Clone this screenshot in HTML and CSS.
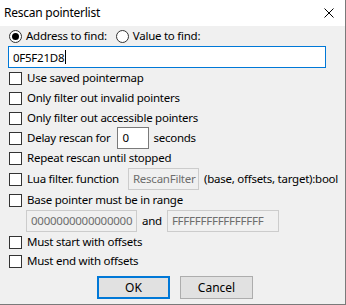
FILE: index.html
```html
<!DOCTYPE html>
<html lang="en">
<head>
  <meta charset="UTF-8" />
  <title>Rescan pointerlist</title>
  <link rel="stylesheet" href="styles.css">
</head>
<body>
  <div class="dialog">
    <div class="titlebar">
      <span class="title">Rescan pointerlist</span>
      <svg class="close" width="10" height="10" viewBox="0 0 10 10">
        <path d="M0.5 0.5 L9.5 9.5 M9.5 0.5 L0.5 9.5" stroke="#000" stroke-width="1" fill="none"/>
      </svg>
    </div>
    <div class="content">
      <div class="row radios">
        <span class="radio checked"></span><span class="label">Address to find:</span>
        <span class="radio second"></span><span class="label">Value to find:</span>
      </div>
      <div class="address">0F5F21D8<span class="caret"></span></div>

      <div class="row"><span class="check"></span><span class="label">Use saved pointermap</span></div>
      <div class="row"><span class="check"></span><span class="label">Only filter out invalid pointers</span></div>
      <div class="row"><span class="check"></span><span class="label">Only filter out accessible pointers</span></div>
      <div class="row">
        <span class="check"></span><span class="label">Delay rescan for</span>
        <span class="field delay">0</span>
        <span class="label">seconds</span>
      </div>
      <div class="row"><span class="check"></span><span class="label">Repeat rescan until stopped</span></div>
      <div class="row tall">
        <span class="check"></span><span class="label">Lua filter. function</span>
        <span class="field disabled luafn">RescanFilter</span>
        <span class="label">(base, offsets, target):bool</span>
      </div>
      <div class="row"><span class="check"></span><span class="label">Base pointer must be in range</span></div>
      <div class="range">
        <span class="field disabled from">0000000000000000</span>
        <span class="label">and</span>
        <span class="field disabled to">FFFFFFFFFFFFFFFF</span>
      </div>
      <div class="row"><span class="check"></span><span class="label">Must start with offsets</span></div>
      <div class="row short"><span class="check"></span><span class="label">Must end with offsets</span></div>

      <div class="buttons">
        <button class="btn default">OK</button>
        <button class="btn">Cancel</button>
      </div>
    </div>
  </div>
</body>
</html>
```

FILE: styles.css
```css
body {
  margin: 0;
  background: #2b2b2b;
  font-family: 'Noto Sans', sans-serif;
  font-size: 11.5px;
  letter-spacing: -0.25px;
  color: #000;
}

.dialog {
  width: 345px;
  height: 304px;
  background-color: #f0f0f0;
  border-right: 1px solid #7a7a7a;
  border-bottom: 1px solid #7a7a7a;
  display: flex;
  flex-direction: column;
}

.titlebar {
  height: 26px;
  background-color: white;
  display: flex;
  align-items: center;
  justify-content: space-between;
  padding: 0 11px 0 4px;
}

.title {
  font-size: 12px;
  margin-top: -1px;
}

.content {
  padding: 0 0 0 9px;
  display: flex;
  flex-direction: column;
}

.row {
  height: 20px;
  display: flex;
  align-items: center;
}

.row.tall {
  height: 22px;
}

.row.short {
  height: 18px;
}

.label {
  white-space: nowrap;
  line-height: 16px;
}

.check {
  width: 11px;
  height: 11px;
  border: 1px solid #333;
  background-color: white;
  margin-right: 5px;
  flex-shrink: 0;
}

.radio {
  width: 11px;
  height: 11px;
  border: 1px solid #333;
  border-radius: 50%;
  background-color: white;
  margin-right: 4px;
  display: flex;
  align-items: center;
  justify-content: center;
}

.radio.checked::after {
  content: "";
  width: 7px;
  height: 7px;
  border-radius: 50%;
  background-color: #000;
}

.radio.second {
  margin-left: 9px;
}

.address {
  width: 312px;
  height: 20px;
  margin-left: -1px;
  border: 1px solid #0078d7;
  background-color: white;
  padding-left: 4px;
  display: flex;
  align-items: center;
}

.caret {
  width: 1px;
  height: 14px;
  background-color: #000;
  margin-left: 1px;
}

.field {
  height: 20px;
  border: 1px solid #7a7a7a;
  background-color: white;
  line-height: 20px;
  padding-left: 4px;
  flex-shrink: 0;
}

.field.disabled {
  border-color: #cccccc;
  background-color: #f0f0f0;
  color: #6d6d6d;
}

.delay {
  width: 26px;
  margin: 0 4px 0 7px;
}

.luafn {
  width: 65px;
  margin: 0 5px 0 9px;
}

.range {
  height: 22px;
  padding-left: 17px;
  display: flex;
  align-items: center;
}

.from {
  width: 105px;
}

.to {
  width: 106px;
}

.range .label {
  margin: 0 5px;
}

.buttons {
  display: flex;
  gap: 10px;
  padding-left: 88px;
  margin-top: 6px;
}

.btn {
  width: 73px;
  height: 23px;
  background-color: #e1e1e1;
  border: 1px solid #adadad;
  font-family: 'Noto Sans', sans-serif;
  font-size: 12px;
  padding: 0;
  color: #000;
}

.btn.default {
  border: 2px solid #0078d7;
}
```
